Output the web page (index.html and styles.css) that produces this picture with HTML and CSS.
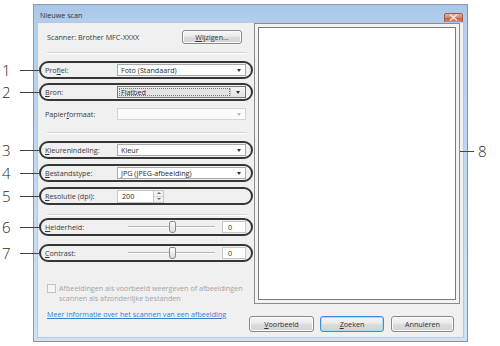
FILE: index.html
```html
<!DOCTYPE html>
<html lang="nl">
<head>
<meta charset="utf-8">
<title>Nieuwe scan</title>
<link rel="stylesheet" href="styles.css">
</head>
<body>
<div class="window">
  <div class="titlebar">
    <span class="title">Nieuwe scan</span>
    <span class="close"><svg width="9" height="7" viewBox="0 0 9 7"><path d="M1.5 1 L7.5 6 M7.5 1 L1.5 6" stroke="#f4e6e2" stroke-width="1.6" stroke-linecap="round"/></svg></span>
  </div>
  <div class="client">
    <div class="left">
      <div class="scanner-row">
        <span>Scanner: Brother MFC-XXXX</span>
        <span class="btn btn-small"><u>W</u>ijzigen...</span>
      </div>
      <div class="sep sep-a"></div>

      <div class="row ring r-profiel">
        <span class="callout"><span class="num">1</span><span class="cl-line"></span></span>
        <span class="lbl">Pro<u>f</u>iel:</span>
        <span class="combo"><span class="combo-text">Foto (Standaard)</span><span class="arrow"></span></span>
      </div>
      <div class="row ring r-bron">
        <span class="callout"><span class="num">2</span><span class="cl-line"></span></span>
        <span class="lbl"><u>B</u>ron:</span>
        <span class="combo combo-focus"><span class="combo-text"><span class="focus">Flatbed</span></span><span class="arrow-btn"><span class="arrow"></span></span></span>
      </div>
      <div class="row plain r-papier">
        <span class="lbl">Papier<u>f</u>ormaat:</span>
        <span class="combo combo-disabled"><span class="combo-text"></span><span class="arrow"></span></span>
      </div>
      <div class="sep sep-b"></div>

      <div class="row ring r-kleur">
        <span class="callout"><span class="num">3</span><span class="cl-line"></span></span>
        <span class="lbl"><u>K</u>leurenindeling:</span>
        <span class="combo"><span class="combo-text">Kleur</span><span class="arrow"></span></span>
      </div>
      <div class="row ring r-bestand">
        <span class="callout"><span class="num">4</span><span class="cl-line"></span></span>
        <span class="lbl"><u>B</u>estandstype:</span>
        <span class="combo"><span class="combo-text">JPG (JPEG-afbeelding)</span><span class="arrow"></span></span>
      </div>
      <div class="row ring r-resol">
        <span class="callout"><span class="num">5</span><span class="cl-line"></span></span>
        <span class="lbl"><u>R</u>esolutie (dpi):</span>
        <span class="numbox">200</span>
        <span class="spin"><span class="spin-up"></span><span class="spin-down"></span></span>
      </div>
      <div class="sep sep-c"></div>

      <div class="row ring r-helder">
        <span class="callout"><span class="num">6</span><span class="cl-line"></span></span>
        <span class="lbl"><u>H</u>elderheid:</span>
        <span class="slider"><span class="track"></span><span class="thumb"></span></span>
        <span class="valbox">0</span>
      </div>
      <div class="row ring r-contrast">
        <span class="callout"><span class="num">7</span><span class="cl-line"></span></span>
        <span class="lbl"><u>C</u>ontrast:</span>
        <span class="slider"><span class="track"></span><span class="thumb"></span></span>
        <span class="valbox">0</span>
      </div>

      <div class="note">
        <span class="check"></span>
        <span class="note-text">Afbeeldingen als voorbeeld weergeven of afbeeldingen<br>scannen als afzonderlijke bestanden</span>
      </div>
      <a class="link" href="#">Meer informatie over het scannen van een afbeelding</a>
    </div>

    <div class="right">
      <div class="preview">
        <span class="callout8"><span class="cl-line"></span><span class="num">8</span></span>
      </div>
      <div class="buttons">
        <span class="btn b-voor"><u>V</u>oorbeeld</span>
        <span class="btn btn-default b-zoek"><u>Z</u>oeken</span>
        <span class="btn b-ann">Annuleren</span>
      </div>
    </div>
  </div>
</div>
</body>
</html>
```

FILE: styles.css
```css
* { box-sizing: border-box; }

html, body {
  margin: 0;
  padding: 0;
  background: #ffffff;
}

body {
  width: 500px;
  height: 346px;
  overflow: hidden;
  font-family: "Open Sans", "Noto Sans", sans-serif;
  font-size: 7.2px;
  color: #3a3a3a;
}

u { text-decoration: underline; text-underline-offset: 1px; }

.window {
  margin: 4px 0 0 33px;
  width: 435px;
  height: 338px;
  border-top: 1px solid #8e9aa6;
  border-left: 1px solid #8e9aa6;
  border-right: 1px solid #5e9fd8;
  border-bottom: 1px solid #5e9fd8;
  background: linear-gradient(to bottom, #a7c6e7 0px, #b3cfeb 18px, #c4dbf2 60%, #cde2f5 100%);
  padding: 0 3px 3px 3px;
  display: flex;
  flex-direction: column;
}

.titlebar {
  height: 17px;
  display: flex;
  align-items: center;
  justify-content: space-between;
  padding-left: 3px;
  flex: none;
}

.title {
  font-size: 7.2px;
  color: #333;
  margin-top: 3px;
}

.close {
  width: 19px;
  height: 10px;
  margin-top: 8px;
  margin-right: 1px;
  border: 1px solid #9a5a50;
  border-radius: 2px;
  background: linear-gradient(to bottom, #e2aea3 0%, #d08a7a 45%, #c4604d 55%, #d58d7c 100%);
  display: flex;
  align-items: center;
  justify-content: center;
}

.client {
  flex: 1;
  background: #f0f0f0;
  border: 1px solid #b6c9dc;
  display: flex;
}

.left {
  width: 211px;
  padding-left: 1px;
  display: flex;
  flex-direction: column;
  flex: none;
}

.scanner-row {
  margin-top: 7px;
  margin-left: 8px;
  width: 195px;
  height: 14px;
  display: flex;
  align-items: center;
  justify-content: space-between;
}

.btn {
  display: flex;
  align-items: center;
  justify-content: center;
  height: 16px;
  border: 1px solid #8a8a8a;
  border-radius: 3px;
  background: linear-gradient(to bottom, #f6f6f6 0%, #ebebeb 45%, #dddddd 50%, #d2d2d2 100%);
  box-shadow: inset 0 0 0 1px #fbfbfb;
  color: #333;
  font-size: 7.2px;
}

.btn-small {
  width: 60px;
  height: 14px;
}

.sep {
  margin-left: 8px;
  width: 200px;
  height: 2px;
  border-top: 1px solid #d5d5d5;
  border-bottom: 1px solid #ffffff;
}

.sep-a { margin-top: 8px; }
.sep-b { margin-top: 9px; }
.sep-c { margin-top: 9px; }

.row {
  position: relative;
  width: 214px;
  height: 18px;
  border: 2px solid transparent;
  border-radius: 9px;
  padding-left: 4px;
  display: flex;
  align-items: center;
  flex: none;
}

.ring { border-color: #363636; }

.r-profiel { margin-top: 7px; }
.r-bron { margin-top: 4px; }
.r-papier { margin-top: 4px; }
.r-kleur { margin-top: 7px; }
.r-bestand { margin-top: 5px; }
.r-resol { margin-top: 5px; }
.r-helder { margin-top: 2px; }
.r-contrast { margin-top: 8px; }

.lbl {
  width: 72px;
  flex: none;
}

.callout {
  position: absolute;
  left: -41px;
  width: 39px;
  top: -2px;
  bottom: -2px;
  display: flex;
  align-items: center;
}

.num {
  font-family: "Open Sans", "Noto Sans", sans-serif;
  font-size: 15px;
  line-height: 16px;
  color: #2a2a2a;
  font-weight: 300;
}

.callout .num {
  width: 20px;
  padding-left: 2px;
}

.cl-line {
  flex: 1;
  height: 1px;
  background: #444;
}

.combo {
  width: 129px;
  height: 12px;
  border: 1px solid #a9a9a9;
  background: #ffffff;
  display: flex;
  align-items: center;
  justify-content: space-between;
  padding-left: 3px;
  padding-right: 4px;
  color: #2a2a2a;
}

.combo-text {
  flex: 1;
  display: flex;
  align-items: center;
  height: 100%;
}

.arrow {
  width: 0;
  height: 0;
  border-left: 2.5px solid transparent;
  border-right: 2.5px solid transparent;
  border-top: 3px solid #333;
}

.combo-focus {
  border-color: #767676;
  background: linear-gradient(to bottom, #f4f4f4, #e2e2e2);
  padding: 1px;
}

.focus {
  display: flex;
  align-items: center;
  height: 100%;
  width: 111px;
  padding-left: 2px;
  background: #e4e4e4;
  outline: 1px dotted #777;
  outline-offset: -1px;
}

.arrow-btn {
  width: 14px;
  height: 100%;
  border-left: 1px solid #c4c4c4;
  display: flex;
  align-items: center;
  justify-content: center;
}

.combo-disabled {
  border-color: #d3d3d3;
  background: #fbfbfb;
}

.combo-disabled .arrow {
  border-top-color: #b8b8b8;
}

.numbox {
  width: 36px;
  height: 13px;
  border: 1px solid #c6c6c6;
  border-right: none;
  background: #ffffff;
  padding-left: 4px;
  display: flex;
  align-items: center;
  color: #2a2a2a;
}

.spin {
  width: 11px;
  height: 13px;
  display: flex;
  flex-direction: column;
  border: 1px solid #c6c6c6;
  background: #f2f2f2;
}

.spin-up, .spin-down {
  flex: 1;
  display: flex;
  align-items: center;
  justify-content: center;
}

.spin-up::after {
  content: "";
  border-left: 2px solid transparent;
  border-right: 2px solid transparent;
  border-bottom: 2px solid #6a6a6a;
}

.spin-down {
  border-top: 1px solid #d6d6d6;
}

.spin-down::after {
  content: "";
  border-left: 2px solid transparent;
  border-right: 2px solid transparent;
  border-top: 2px solid #6a6a6a;
}

.slider {
  position: relative;
  width: 105px;
  height: 14px;
  flex: none;
  display: flex;
  align-items: center;
  padding-left: 11px;
}

.track {
  width: 87px;
  height: 2px;
  border-top: 1px solid #b4b4b4;
  border-bottom: 1px solid #ffffff;
}

.thumb {
  position: absolute;
  left: 52px;
  top: 1px;
  width: 7px;
  height: 12px;
  border: 1px solid #8a8a8a;
  border-radius: 2px 2px 3px 3px;
  background: linear-gradient(to bottom, #fbfbfb, #dcdcdc);
}

.valbox {
  width: 24px;
  height: 12px;
  border: 1px solid #c8c8c8;
  background: #ffffff;
  padding-left: 5px;
  display: flex;
  align-items: center;
  color: #333;
}

.note {
  margin-top: 22px;
  margin-left: 8px;
  display: flex;
  align-items: flex-start;
  color: #a3a3a3;
  line-height: 9.5px;
}

.check {
  width: 9px;
  height: 9px;
  border: 1px solid #c2c2c2;
  background: #f5f5f5;
  margin-right: 3px;
  flex: none;
}

.link {
  margin-top: 6px;
  margin-left: 8px;
  color: #3a7fc8;
  text-decoration: underline;
  text-underline-offset: 1px;
  line-height: 10px;
}

.right {
  flex: 1;
  display: flex;
  flex-direction: column;
  padding-right: 3px;
}

.preview {
  position: relative;
  margin-left: 5px;
  height: 281px;
  border: 1px solid #8c8c8c;
  background: #ffffff;
  box-shadow: inset 0 0 0 3px #f3f3f3, inset 0 0 0 4px #7b7b7b;
}

.callout8 {
  position: absolute;
  left: calc(100% + 1px);
  top: 119px;
  width: 30px;
  height: 16px;
  display: flex;
  align-items: center;
}

.callout8 .cl-line {
  flex: none;
  width: 14px;
}

.callout8 .num {
  margin-left: 4px;
}

.buttons {
  margin-top: 12px;
  display: flex;
  gap: 6px;
}

.b-voor { width: 65px; }
.b-zoek { width: 64px; }
.b-ann { width: 63px; margin-left: 1px; }

.btn-default {
  border-color: #3c8fd0;
  box-shadow: inset 0 0 0 1px #a8dcf5;
}
```
